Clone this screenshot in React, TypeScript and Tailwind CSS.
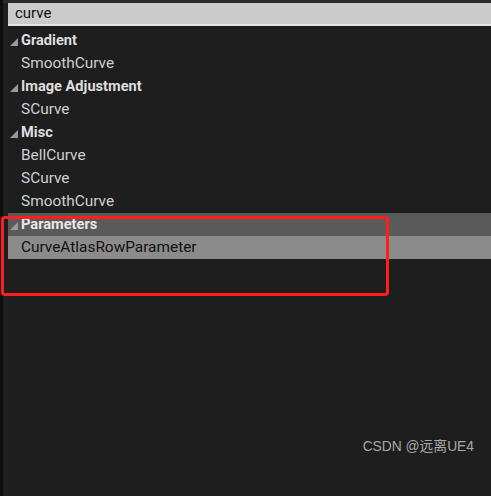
const groups: { name: string; items: string[] }[] = [
  { name: "Gradient", items: ["SmoothCurve"] },
  { name: "Image Adjustment", items: ["SCurve"] },
  { name: "Misc", items: ["BellCurve", "SCurve", "SmoothCurve"] },
  { name: "Parameters", items: ["CurveAtlasRowParameter"] },
];

function Triangle() {
  return (
    <svg width="8" height="8" viewBox="0 0 8 8" className="mr-[3px] mt-[2px] shrink-0">
      <polygon points="8,0 8,8 0,8" fill="#9a9a9a" />
    </svg>
  );
}

export default function App() {
  return (
    <div
      className="relative flex h-[496px] w-[491px] overflow-hidden bg-[#1e1e1e]"
      style={{ fontFamily: "Roboto, 'Noto Sans CJK SC', sans-serif" }}
    >
      <div className="w-[3px] shrink-0 bg-[#0e0e0e]" />
      <div className="flex flex-1 flex-col">
        <div className="h-[3px] bg-[#2a2a2a]" />
        <div className="flex pl-[5px]">
          <div className="flex h-[23px] flex-1 items-center border-b-2 border-[#e6e6e6] bg-[#cbcbcb] pl-[7px] text-[15px] text-[#111]">
            curve
          </div>
        </div>
        <div className="mt-[3px] flex flex-col pl-[5px]">
          {groups.map((g) => (
            <div key={g.name} className="flex flex-col">
              <div
                className={`flex h-[23px] items-center pl-[2px] text-[14.6px] font-bold ${
                  g.name === "Parameters" ? "bg-[#5a5a5a] text-[#e8e8e8]" : "text-[#dedede]"
                }`}
              >
                <Triangle />
                {g.name}
              </div>
              {g.items.map((it) => (
                <div
                  key={it}
                  className={`flex h-[23px] items-center pl-[13px] text-[15.4px] ${
                    g.name === "Parameters" ? "bg-[#8b8b8b] text-[#111]" : "text-[#cfcfcf]"
                  }`}
                >
                  {it}
                </div>
              ))}
            </div>
          ))}
        </div>
      </div>
      <div className="absolute left-[1px] top-[216px] h-[80px] w-[388px] rounded-[4px] border-[3px] border-[#ff1d1d]" />
      <div
        className="absolute bottom-[38px] right-[17px] text-[13.8px] text-[#a8a8a8]"
        style={{ fontFamily: "'Liberation Sans', 'Noto Sans CJK SC', sans-serif" }}
      >
        CSDN @远离UE4
      </div>
    </div>
  );
}
